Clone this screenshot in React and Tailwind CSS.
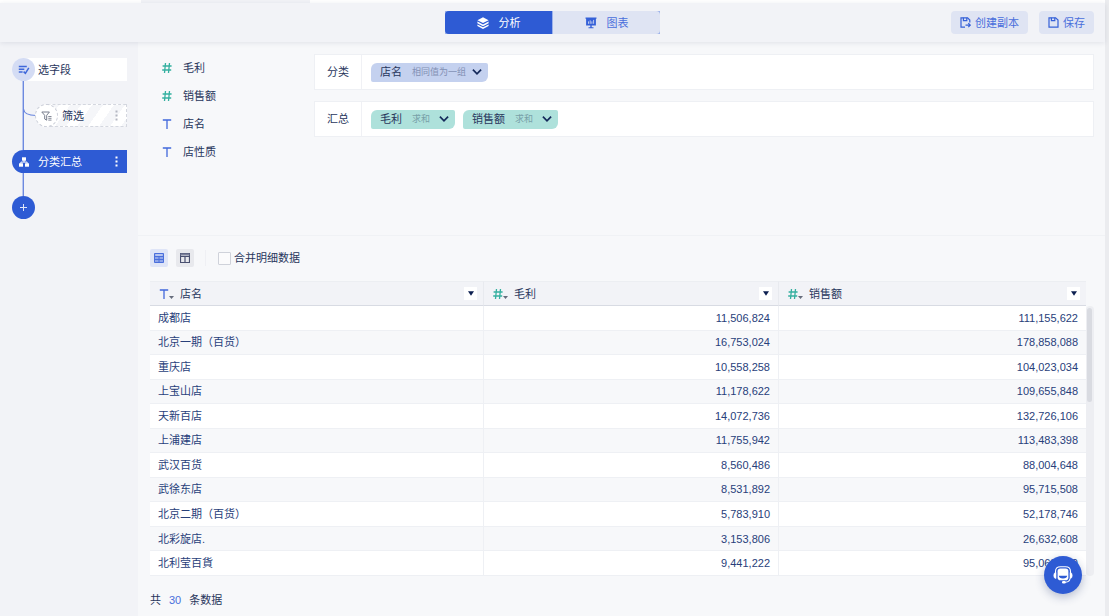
import React, { useState } from 'react';

const FIELDS = [
  { name: '毛利', type: 'number' },
  { name: '销售额', type: 'number' },
  { name: '店名', type: 'text' },
  { name: '店性质', type: 'text' },
];

const ROWS = [
  ['成都店', 11506824, 111155622],
  ['北京一期（百货）', 16753024, 178858088],
  ['重庆店', 10558258, 104023034],
  ['上宝山店', 11178622, 109655848],
  ['天新百店', 14072736, 132726106],
  ['上浦建店', 11755942, 113483398],
  ['武汉百货', 8560486, 88004648],
  ['武徐东店', 8531892, 95715508],
  ['北京二期（百货）', 5783910, 52178746],
  ['北彩旋店.', 3153806, 26632608],
  ['北利莹百貨', 9441222, 95063770],
];

// Widths are shared out in proportion when the table is wider than their sum
const COLUMNS = [
  { name: '店名', type: 'text', width: 'w-[334px]' },
  { name: '毛利', type: 'number', width: 'w-[295px]' },
  { name: '销售额', type: 'number', width: 'w-[307px]' },
];

function TypeIcon({ type }) {
  if (type === 'number') {
    return (
      <svg width="10" height="10" viewBox="0 0 10 10" fill="none" stroke="#35b0a0" strokeWidth="1.3" className="shrink-0">
        <path d="M3.500 0 2.500 10M7.500 0 6.500 10M0.600 3h9M0.200 7h9" />
      </svg>
    );
  }
  return (
    <svg width="10" height="10" viewBox="0 0 10 10" fill="none" stroke="#4268dc" strokeWidth="1.3" className="shrink-0">
      <path d="M0.800 1h8.400M5 1v9" />
    </svg>
  );
}

function DotsIcon({ className }) {
  return (
    <svg width="3" height="11" viewBox="0 0 3 11" fill="currentColor" className={className}>
      <rect x="0.500" y="0.500" width="2" height="2" />
      <rect x="0.500" y="4.500" width="2" height="2" />
      <rect x="0.500" y="8.500" width="2" height="2" />
    </svg>
  );
}

function LayersIcon() {
  return (
    <svg width="12" height="12" viewBox="0 0 12 12" fill="#fff">
      <path d="M6 0.300 11.600 3.200 6 6.100 0.400 3.200z" />
      <path d="M0.400 4.600 6 7.500 11.600 4.600v1.700L6 9.200 0.400 6.300z" />
      <path d="M0.400 7.400 6 10.300l5.600-2.900V9L6 11.900 0.400 9z" />
    </svg>
  );
}

function BoardIcon() {
  return (
    <svg width="12" height="12" viewBox="0 0 12 12" fill="#3560d8">
      <path d="M0.500 0.500h11v1.300h-0.600v6.800H1.100V1.800H0.500z" />
      <path d="M5.300 8h1.400v2.200h1.800v1.100h-5v-1.100h1.800z" />
      <path d="M3.500 4.400v2.400M5.200 3.400v3.400M6.900 4.400v2.400M8.600 2.900v3.900" stroke="#dfe4f3" strokeWidth="0.800" />
    </svg>
  );
}

function SaveIcon({ copy }) {
  return (
    <svg width="11" height="11" viewBox="0 0 11 11" fill="none" stroke="#3560d8" strokeWidth="1.200">
      {copy ? (
        <>
          <path d="M5 10.200H1V0.800h6.600L9.800 3v2.400" />
          <path d="M5.500 8.200h4.600M8.300 6.200l2 2-2 2" />
        </>
      ) : (
        <path d="M1 0.800h6.600L10 3v7.200H1z" />
      )}
      <path d="M3.400 0.800v2.800h3.400V0.800" />
    </svg>
  );
}

function TabButton({ active, icon, children }) {
  return (
    <button
      type="button"
      className={
        active
          ? 'flex h-[23px] w-[107px] items-center justify-center gap-2.5 bg-[#2e5bd4] text-white first:rounded-l-sm last:rounded-r-sm'
          : 'flex h-[23px] w-[107px] items-center justify-center gap-2.5 bg-[#dfe4f3] text-[#4a6fdc] first:rounded-l-sm last:rounded-r-sm'
      }
    >
      {icon}
      {children}
    </button>
  );
}

function Header() {
  return (
    <header className="relative z-10 grid h-[39px] grid-cols-[1fr_auto_1fr] items-center bg-[#f2f3f7] px-[11px] shadow-[0_1px_5px_rgba(30,40,80,0.1)]">
      <span />
      <nav className="flex gap-px bg-[#9db2ea]">
        <TabButton active icon={<LayersIcon />}>分析</TabButton>
        <TabButton icon={<BoardIcon />}>图表</TabButton>
      </nav>
      <div className="flex justify-end gap-[11px] text-[#4a6fdc]">
        <button type="button" className="flex h-[23px] items-center gap-1 rounded-sm bg-[#dfe4f3] px-[9px]">
          <SaveIcon copy />
          创建副本
        </button>
        <button type="button" className="flex h-[23px] items-center gap-1 rounded-sm bg-[#dfe4f3] px-[9px]">
          <SaveIcon />
          保存
        </button>
      </div>
    </header>
  );
}

function Connector() {
  return <div className="ml-2.5 h-[23px] w-0.5 border-r border-[#6d89df] bg-[#b9c7ef]" />;
}

function Steps() {
  return (
    <aside className="w-[138px] shrink-0 bg-[#f2f3f7] pt-4 pr-[11px] pl-3 text-[#28365c]">
      <button type="button" className="flex h-[23px] w-full items-center rounded-l-full bg-white">
        <span className="flex size-[23px] items-center justify-center rounded-full bg-[#d4dcf4]">
          <svg width="12" height="10" viewBox="0 0 12 10" fill="none" stroke="#3f68da" strokeWidth="1.500">
            <path d="M0.800 1.500h8M0.800 4.300h5.500M0.800 7.100h3.800" />
            <path d="M5.600 6.600 7.400 8.400 10.800 2.800" />
          </svg>
        </span>
        <span className="ml-[3px]">选字段</span>
      </button>
      <Connector />
      <div className="flex h-[23px]">
        <svg width="24" height="23" viewBox="0 0 24 23" fill="none" className="shrink-0">
          <path d="M10.500 0v23" stroke="#b9c7ef" />
          <path d="M11.500 0v23" stroke="#6d89df" />
          <path d="M11.500 5c0.500 4.500 4 6.500 12.500 6.500" stroke="#6a87de" strokeWidth="1.200" />
        </svg>
        <button
          type="button"
          className="flex h-[23px] flex-1 items-center rounded-l-full border border-dashed border-[#d4d7df] bg-[repeating-linear-gradient(125deg,#fff_0,#fff_9px,#f5f6f9_9px,#f5f6f9_18px)]"
        >
          <span className="-ml-0.5 flex size-[23px] items-center justify-center rounded-full border border-dashed border-[#cdd0da] bg-white">
            <svg width="11" height="10" viewBox="0 0 11 10" fill="none" stroke="#777d8c">
              <path d="M0.800 1h7.600L5.700 4.300v4.900L3.700 8V4.300z" />
              <path d="M7.300 5.500h3.200M7.300 7.300h3.200M7.300 9.100h3.200" strokeWidth="0.900" />
            </svg>
          </span>
          <span className="ml-1">筛选</span>
          <DotsIcon className="mr-2 ml-auto text-[#b3b6c1]" />
        </button>
      </div>
      <Connector />
      <button type="button" className="flex h-[23px] w-full items-center rounded-l-full bg-[#2e5bd4] text-white">
        <span className="flex size-[23px] items-center justify-center">
          <svg width="10" height="10" viewBox="0 0 10 10" fill="#fff">
            <rect x="3" y="0.300" width="4" height="3.400" />
            <rect x="0" y="6.300" width="4" height="3.400" />
            <rect x="6" y="6.300" width="4" height="3.400" />
            <path d="M5 3v2M1.900 7V5.100h6.200V7" fill="none" stroke="#fff" />
          </svg>
        </span>
        <span className="ml-[3px]">分类汇总</span>
        <DotsIcon className="mr-[9px] ml-auto" />
      </button>
      <Connector />
      <button type="button" aria-label="添加" className="flex size-[23px] items-center justify-center rounded-full bg-[#2e5bd4]">
        <svg width="7" height="7" viewBox="0 0 7 7" stroke="#dfe6fa">
          <path d="M0 3.500h7M3.500 0v7" />
        </svg>
      </button>
    </aside>
  );
}

function Chip({ name, mode, tone }) {
  return (
    <button
      type="button"
      className={
        tone === 'blue'
          ? 'flex h-[19px] items-center rounded-xs rounded-tl-md rounded-br-md bg-[#c4d1ef] pr-1.5 pl-[9px]'
          : 'flex h-[19px] items-center rounded-xs rounded-tl-md rounded-br-md bg-[#aee1db] pr-1.5 pl-[9px]'
      }
    >
      {name}
      <span className={tone === 'blue' ? 'mr-1.5 ml-2.5 text-[9px] text-[#8290b4]' : 'mr-[9px] ml-2.5 text-[9px] text-[#78a0a8]'}>{mode}</span>
      <svg width="10" height="6" viewBox="0 0 10 6" fill="none" stroke="#14295a" strokeWidth="1.700">
        <path d="M0.900 0.700 5 4.800 9.100 0.700" />
      </svg>
    </button>
  );
}

function GroupRow({ label, children }) {
  return (
    <div className="flex h-9 border border-[#eef0f4] bg-white">
      <div className="flex w-[47px] items-center justify-center border-r border-[#f0f1f5]">{label}</div>
      <div className="flex flex-1 items-center gap-2 pl-[9px]">{children}</div>
    </div>
  );
}

function ConfigPanel() {
  return (
    <section className="flex h-[194px] shrink-0 border-b border-[#f0f2f5] pr-[11px]">
      <ul className="w-44 shrink-0 pt-3 pl-6">
        {FIELDS.map((field) => (
          <li key={field.name} className="flex h-7 items-center gap-[11px]">
            <TypeIcon type={field.type} />
            {field.name}
          </li>
        ))}
      </ul>
      <div className="flex flex-1 flex-col gap-[11px] pt-3">
        <GroupRow label="分类">
          <Chip name="店名" mode="相同值为一组" tone="blue" />
        </GroupRow>
        <GroupRow label="汇总">
          <Chip name="毛利" mode="求和" tone="green" />
          <Chip name="销售额" mode="求和" tone="green" />
        </GroupRow>
      </div>
    </section>
  );
}

function Toolbar() {
  const [merged, setMerged] = useState(false);

  return (
    <div className="flex h-[18px] items-center">
      <button type="button" aria-label="表格视图" className="flex size-[18px] items-center justify-center rounded-xs bg-[#dfe5f7]">
        <svg width="10" height="10" viewBox="0 0 10 10" fill="none" stroke="#4a6fdc">
          <path d="M0.500 0.500h9v9h-9z" fill="#8ea5e9" />
          <path d="M0.500 3.500h9M5 3.500v6M1 6.500h8" />
          <path d="M1.500 2h7" stroke="#dfe5f7" />
        </svg>
      </button>
      <button type="button" aria-label="列视图" className="ml-2 flex size-[18px] items-center justify-center rounded-xs bg-[#e8e9ed]">
        <svg width="10" height="10" viewBox="0 0 10 10" fill="none" stroke="#4a5070">
          <path d="M0.500 0.500h9v9h-9zM5 3v6.500" strokeWidth="1.200" />
          <path d="M0 3.500h10" />
          <path d="M0.500 1.500h9" stroke="#7b809a" strokeWidth="2" />
        </svg>
      </button>
      <span className="mx-[11px] h-4 w-px bg-[#eff0f4]" />
      <input
        id="merge"
        type="checkbox"
        checked={merged}
        onChange={(e) => setMerged(e.target.checked)}
        className="ml-px size-[13px] appearance-none rounded-[1px] border border-[#cfd2da] bg-[#fbfbfc] checked:bg-[#2e5bd4]"
      />
      <label htmlFor="merge" className="ml-[3px] leading-[18px]">合并明细数据</label>
    </div>
  );
}

function DataTable() {
  return (
    <div className="mt-3.5 flex">
      <table className="h-[295px] flex-1 table-fixed border-separate border-spacing-0 text-[#28407a]">
        <thead>
          <tr className="h-[25px] bg-[#f2f3f7] text-[#28365c]">
            {COLUMNS.map((col) => (
              <th key={col.name} className={`${col.width} border-y border-r border-t-[#eceef2] border-r-[#e8eaef] border-b-[#d8dbe3] p-0 font-normal last:border-r-0`}>
                <div className="flex items-center pr-1.5 pl-[9px]">
                  <TypeIcon type={col.type} />
                  <svg width="5" height="3" viewBox="0 0 5 3" fill="#666c7c" className="mt-2">
                    <path d="M0 0h5L2.500 3z" />
                  </svg>
                  <span className="ml-1.5">{col.name}</span>
                  <button type="button" aria-label={`${col.name} 排序`} className="ml-auto flex size-[13px] items-center justify-center bg-white">
                    <svg width="6" height="5" viewBox="0 0 6 5" fill="#0c1f50">
                      <path d="M0 0.300h6L3 4.700z" />
                    </svg>
                  </button>
                </div>
              </th>
            ))}
          </tr>
        </thead>
        <tbody>
          {ROWS.map(([name, profit, sales]) => (
            <tr key={name} className="bg-white even:bg-[#f7f8fa]">
              <td className="border-r border-b border-[#eef0f4] px-2 py-0">{name}</td>
              <td className="border-r border-b border-[#eef0f4] px-2 py-0 text-right">{profit.toLocaleString('en-US')}</td>
              <td className="border-b border-[#eef0f4] px-2 py-0 text-right">{sales.toLocaleString('en-US')}</td>
            </tr>
          ))}
        </tbody>
      </table>
      <div className="mt-[25px] w-2 rounded-full bg-[#edeef2] px-px py-0.5">
        <div className="h-[94px] w-[5px] rounded-full bg-[#d9dbe1]" />
      </div>
    </div>
  );
}

function SupportButton() {
  return (
    <button
      type="button"
      aria-label="在线客服"
      className="fixed right-[27px] bottom-[22px] z-20 flex size-[38px] items-center justify-center rounded-full bg-[#2e5bd4] shadow-[0_3px_10px_rgba(30,50,110,0.3)]"
    >
      <svg width="20" height="18" viewBox="0 0 20 18" fill="none" stroke="#fff">
        <path d="M2.500 7V5.500Q2.500 0.800 7.500 0.800h5q5 0 5 4.700V7" strokeWidth="1.100" />
        <rect x="4.600" y="2.600" width="10.800" height="11.600" rx="2.800" fill="#fff" stroke="none" />
        <path d="M5.800 9.800h8.400q-0.300 2.600-4.200 2.600t-4.200-2.600z" fill="#2e5bd4" stroke="none" />
        <path d="M3 6.500v6Q0.800 12.500 0.800 9.500T3 6.500zM17 6.500v6q2.200 0 2.200-3T17 6.500z" fill="#fff" strokeWidth="0.600" />
        <path d="M17 12.500q-0.300 3.500-4.500 3.700" strokeWidth="1.100" />
        <rect x="9" y="15" width="3.800" height="2.400" rx="1.200" fill="#fff" stroke="none" />
      </svg>
    </button>
  );
}

export default function App() {
  return (
    <div className="flex min-h-screen flex-col border-r-4 border-[#ebecef] bg-[#f7f8fa] font-['Liberation_Sans','Noto_Sans_CJK_SC',sans-serif] text-[11px] leading-4 text-[#28365c]">
      <div className="flex h-[3px] bg-white">
        <div className="ml-[141px] w-[169px] bg-[#f2f3f7]" />
      </div>
      <Header />
      <div className="flex flex-1">
        <Steps />
        <main className="flex min-w-0 flex-1 flex-col">
          <ConfigPanel />
          <section className="flex flex-col pt-[13px] pr-[11px] pl-3">
            <Toolbar />
            <DataTable />
            <p className="mt-4 flex">
              共<span className="mx-2 text-[#4a6fdc]">30</span>条数据
            </p>
          </section>
        </main>
      </div>
      <SupportButton />
    </div>
  );
}
